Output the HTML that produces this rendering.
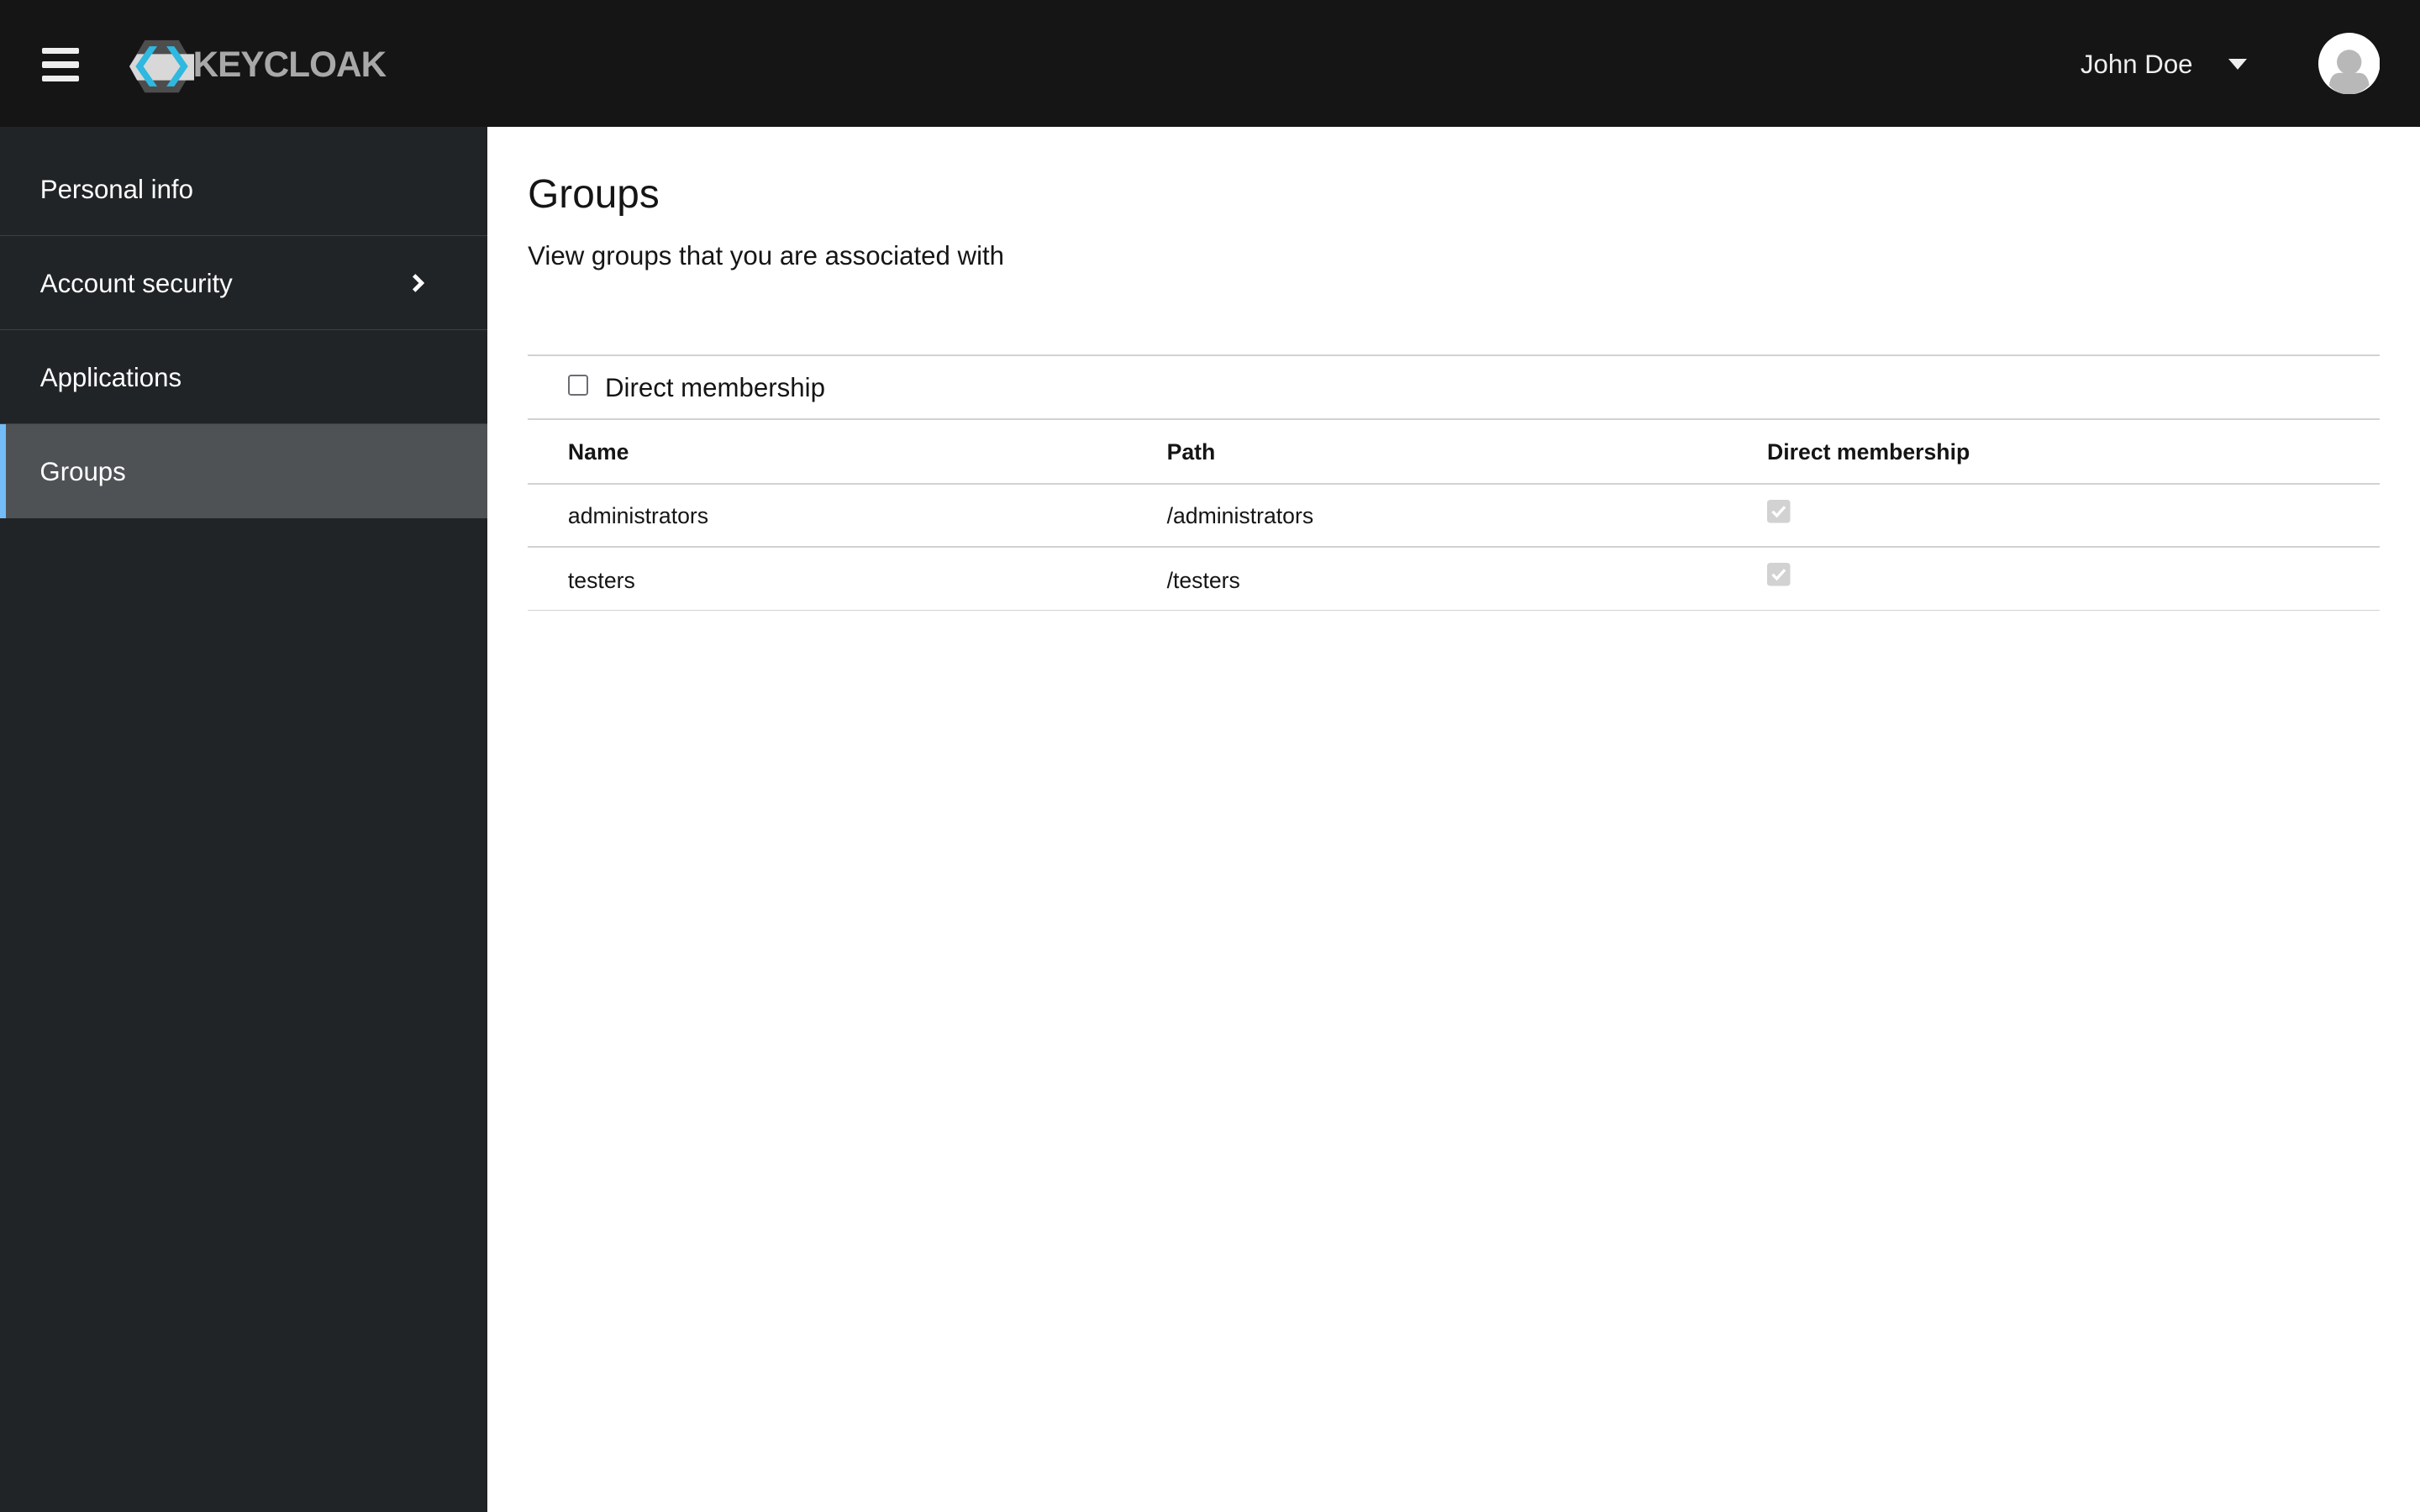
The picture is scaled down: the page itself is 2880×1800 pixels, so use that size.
<!DOCTYPE html>
<html><head><meta charset="utf-8"><style>
html,body{margin:0;padding:0;}
body{width:1568px;height:980px;zoom:1.83673;font-family:"Liberation Sans",sans-serif;background:#fff;position:relative;overflow:hidden;color:#151515}
.hdr{position:absolute;left:0;top:0;width:1568px;height:82px;background:#151515}
.side{position:absolute;left:0;top:82px;width:316px;height:898px;background:#212427}
.nav{height:60px;border-bottom:1px solid #3c3f42;color:#fff;font-size:17px;line-height:62px;padding-left:26px;position:relative;box-sizing:border-box}
.nav.act{background:#4f5255;border-left:4px solid #73bcf7;padding-left:22px;border-bottom:none}
.a{position:absolute;font-size:14.5px}
.line{position:absolute;left:342px;width:1200px;height:1px;background:#d2d2d2}
.cb{position:absolute;width:15px;height:15px}
</style></head><body>
<div class="hdr">
 <div style="position:absolute;left:27px;top:31px;width:24px;height:4px;background:#eee;border-radius:1px"></div>
 <div style="position:absolute;left:27px;top:40px;width:24px;height:4px;background:#eee;border-radius:1px"></div>
 <div style="position:absolute;left:27px;top:49px;width:24px;height:4px;background:#eee;border-radius:1px"></div>
 <svg style="position:absolute;left:84px;top:25px" width="42" height="36" viewBox="0 0 42 36">
  <polygon points="10,1 32,1 42,18 32,35 10,35 0,18" fill="#4d4d4d"/>
  <polygon points="5,10 42,10 42,27 5,27 0,18" fill="#d8d8d8"/>
  <polygon points="13,5 18,5 9,18 18,31 13,31 4,18" fill="#2fb8e0"/>
  <polygon points="24,5 29,5 38,18 29,31 24,31 33,18" fill="#2fb8e0"/>
 </svg>
 <div style="position:absolute;left:125px;top:29px;font-size:23px;font-weight:bold;color:#a8a8a8;letter-spacing:-0.5px;line-height:26px">KEYCLOAK</div>
 <div style="position:absolute;left:1348px;top:32px;font-size:17px;color:#eee">John Doe</div>
 <svg style="position:absolute;left:1444px;top:38px" width="12" height="8"><polygon points="0,0 12,0 6,7" fill="#eee"/></svg>
 <svg style="position:absolute;left:1502px;top:21px" width="40" height="40" viewBox="0 0 40 40">
  <circle cx="20" cy="20" r="20" fill="#fff"/><circle cx="20" cy="19" r="8" fill="#b8b8b8"/>
  <path d="M7 34 Q8 26 14 26 L26 26 Q32 26 33 34 Q27 40 20 40 Q12 40 7 34Z" fill="#b8b8b8"/>
 </svg>
</div>
<div class="side">
 <div class="nav" style="margin-top:10px;height:61px">Personal info</div>
 <div class="nav" style="height:61px">Account security<svg style="position:absolute;left:266px;top:24px" width="9" height="13"><path d="M2 1.5 L7 6.5 L2 11.5" stroke="#fff" stroke-width="2.6" fill="none"/></svg></div>
 <div class="nav" style="height:61px">Applications</div>
 <div class="nav act" style="height:61px">Groups</div>
</div>
<div class="a" style="left:342px;top:111px;font-size:26px">Groups</div>
<div class="a" style="left:342px;top:156px;font-size:17px">View groups that you are associated with</div>
<div class="line" style="top:230px"></div>
<div style="position:absolute;left:368px;top:243px;width:11px;height:11px;border:1.5px solid #6a6e73;border-radius:2px"></div>
<div class="a" style="left:392px;top:242px;font-size:17px">Direct membership</div>
<div class="line" style="top:271px"></div>
<div class="a" style="left:368px;top:285px;font-weight:bold">Name</div>
<div class="a" style="left:756px;top:285px;font-weight:bold">Path</div>
<div class="a" style="left:1145px;top:285px;font-weight:bold">Direct membership</div>
<div class="line" style="top:313px"></div>
<div class="a" style="left:368px;top:326px">administrators</div>
<div class="a" style="left:756px;top:326px">/administrators</div>
<svg class="cb" style="left:1145px;top:324px" viewBox="0 0 15 15"><rect width="15" height="15" rx="2" fill="#d2d2d2"/><path d="M3.5 7.5 L6.3 10.3 L11.5 4.5" stroke="#fff" stroke-width="1.8" fill="none"/></svg>
<div class="line" style="top:354px"></div>
<div class="a" style="left:368px;top:368px">testers</div>
<div class="a" style="left:756px;top:368px">/testers</div>
<svg class="cb" style="left:1145px;top:365px" viewBox="0 0 15 15"><rect width="15" height="15" rx="2" fill="#d2d2d2"/><path d="M3.5 7.5 L6.3 10.3 L11.5 4.5" stroke="#fff" stroke-width="1.8" fill="none"/></svg>
<div class="line" style="top:395px"></div>
</body></html>
